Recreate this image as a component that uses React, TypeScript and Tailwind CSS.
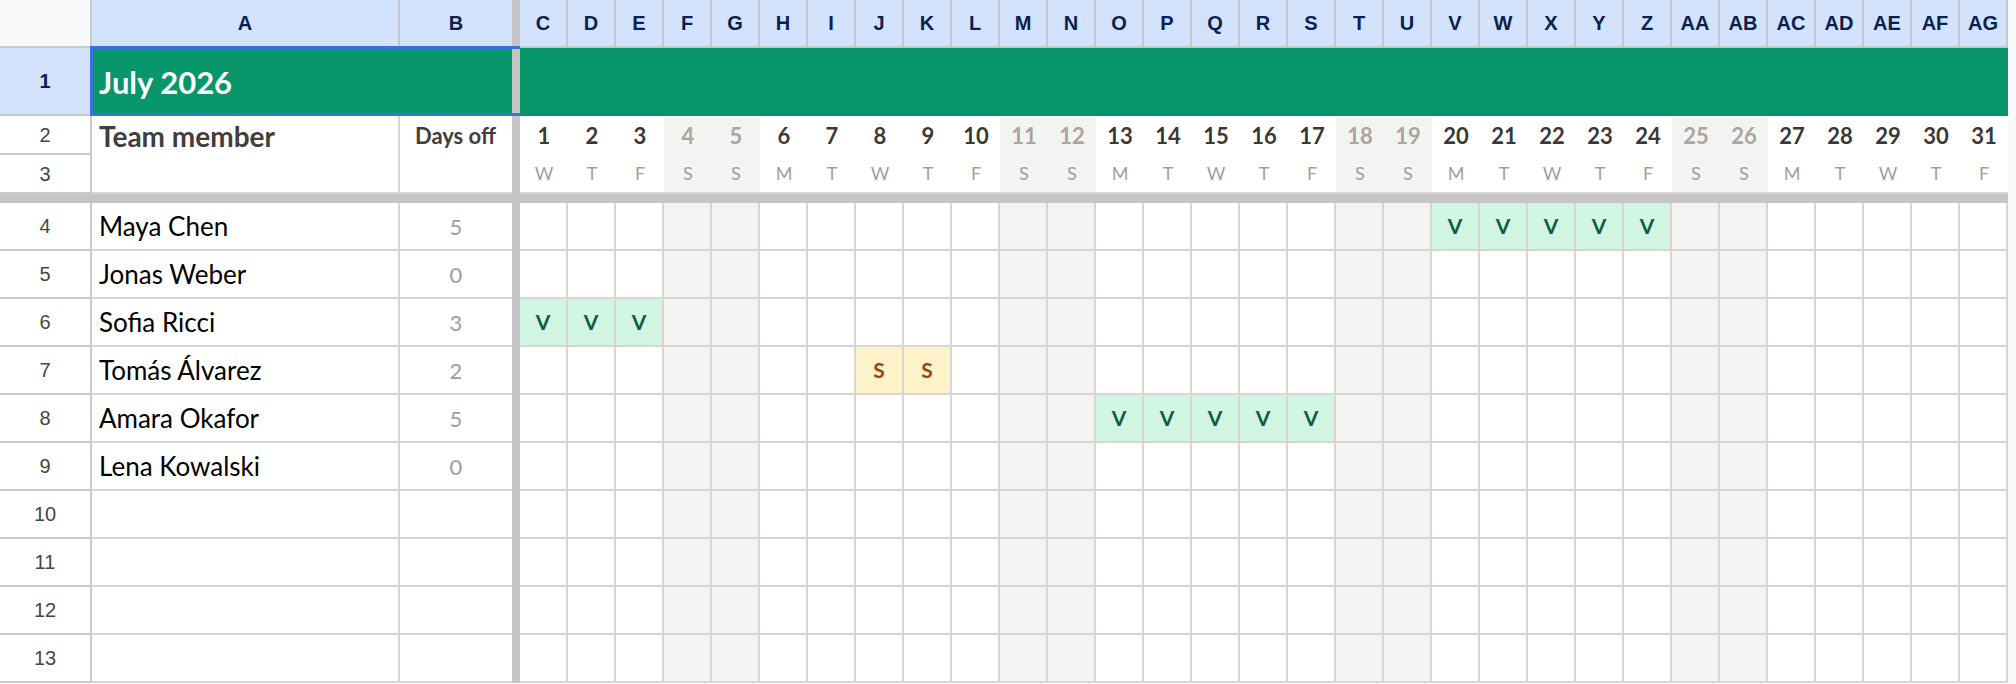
import React from "react";

type Mark = "V" | "S";

interface Member {
  name: string;
  off: number;
  marks: Record<number, Mark>;
}

const WEEKDAYS = ["W", "T", "F", "S", "S", "M", "T"];
const DAYS = Array.from({ length: 31 }, (_, i) => i + 1);

function colName(i: number): string {
  // i = 0 -> "C"
  const n = i + 2;
  if (n < 26) return String.fromCharCode(65 + n);
  return "A" + String.fromCharCode(65 + n - 26);
}

function range(from: number, to: number, m: Mark): Record<number, Mark> {
  const out: Record<number, Mark> = {};
  for (let d = from; d <= to; d++) out[d] = m;
  return out;
}

const MEMBERS: Member[] = [
  { name: "Maya Chen", off: 5, marks: range(20, 24, "V") },
  { name: "Jonas Weber", off: 0, marks: {} },
  { name: "Sofia Ricci", off: 3, marks: range(1, 3, "V") },
  { name: "Tomás Álvarez", off: 2, marks: range(8, 9, "S") },
  { name: "Amara Okafor", off: 5, marks: range(13, 17, "V") },
  { name: "Lena Kowalski", off: 0, marks: {} },
];

const isWeekend = (d: number) => WEEKDAYS[(d - 1) % 7] === "S";

const HEAD = { fontFamily: '"Liberation Sans", Arial, sans-serif' };
const BODY = { fontFamily: 'Lato, "Open Sans", sans-serif' };

function FrozenCol() {
  return <div className="w-[8px] shrink-0 self-stretch bg-[#c5c5c5]" />;
}

function RowHeader({ n }: { n: number }) {
  return (
    <div
      style={HEAD}
      className="w-[92px] shrink-0 h-full flex items-center justify-center border-r-2 border-b-2 border-[#c9c9c9] bg-white text-[20px] text-[#444746]"
    >
      {n}
    </div>
  );
}

function DayCell({ day, mark }: { day: number; mark?: Mark }) {
  let bg = "bg-white";
  if (mark === "V") bg = "bg-[#d1f6e3]";
  else if (mark === "S") bg = "bg-[#fdf2c9]";
  else if (isWeekend(day)) bg = "bg-[#f3f3f1]";
  return (
    <div
      className={`w-[48px] shrink-0 h-full flex items-center justify-center border-r-2 border-b-2 border-[#d9d5d2] ${bg}`}
    >
      {mark === "V" && <span className="font-bold text-[21px] text-[#0b5e45]">V</span>}
      {mark === "S" && <span className="font-bold text-[21px] text-[#9b4211]">S</span>}
    </div>
  );
}

function BodyRow({ n, member }: { n: number; member?: Member }) {
  return (
    <div className="flex h-[48px]" style={BODY}>
      <RowHeader n={n} />
      <div className="w-[308px] shrink-0 h-full flex items-center pl-[7px] border-r-2 border-b-2 border-[#d9d5d2] text-[26px] text-black">
        {member?.name}
      </div>
      <div className="w-[112px] shrink-0 h-full flex items-center justify-center border-b-2 border-[#d9d5d2] text-[22px] text-[#a29d99]">
        {member ? member.off : ""}
      </div>
      <FrozenCol />
      {DAYS.map((d) => (
        <DayCell key={d} day={d} mark={member?.marks[d]} />
      ))}
    </div>
  );
}

export default function App() {
  const rows = Array.from({ length: 10 }, (_, i) => i + 4);
  return (
    <div className="flex h-[684px] w-[2016px] bg-white overflow-hidden">
      <div className="relative w-[2008px] shrink-0 flex flex-col">
        {/* column letters */}
        <div className="flex h-[48px]" style={HEAD}>
          <div className="w-[92px] shrink-0 h-full bg-[#f8f9fa] border-r-2 border-b-2 border-[#c9c9c9]" />
          <div className="w-[308px] shrink-0 h-full bg-[#d3e3fd] border-r-2 border-b-2 border-[#c4c7cc] flex items-center justify-center font-bold text-[20px] text-[#0a2152]">
            A
          </div>
          <div className="w-[112px] shrink-0 h-full bg-[#d3e3fd] border-b-2 border-[#c4c7cc] flex items-center justify-center font-bold text-[20px] text-[#0a2152]">
            B
          </div>
          <FrozenCol />
          {DAYS.map((d, i) => (
            <div
              key={d}
              className="w-[48px] shrink-0 h-full bg-[#d3e3fd] border-r-2 border-b-2 border-[#c4c7cc] flex items-center justify-center font-bold text-[20px] text-[#0a2152]"
            >
              {colName(i)}
            </div>
          ))}
        </div>

        {/* row 1: month title */}
        <div className="flex h-[68px]">
          <div
            style={HEAD}
            className="w-[92px] shrink-0 h-full bg-[#d3e3fd] border-r-2 border-b-2 border-[#c9c9c9] flex items-center justify-center font-bold text-[20px] text-[#0a2152]"
          >
            1
          </div>
          <div
            style={BODY}
            className="w-[420px] shrink-0 h-full bg-[#06966a] flex items-center pl-[7px] font-bold text-[31px] text-white"
          >
            July 2026
          </div>
          <FrozenCol />
          <div className="flex-1 h-full bg-[#06966a]" />
        </div>

        {/* rows 2-3: day numbers and weekday letters */}
        <div className="flex h-[78px]" style={BODY}>
          <div className="w-[92px] shrink-0 h-full flex flex-col" style={HEAD}>
            <div className="h-[39px] flex items-center justify-center border-r-2 border-b-2 border-[#c9c9c9] text-[20px] text-[#444746]">
              2
            </div>
            <div className="h-[39px] flex items-center justify-center border-r-2 border-b-2 border-[#c9c9c9] text-[20px] text-[#444746]">
              3
            </div>
          </div>
          <div className="w-[308px] shrink-0 h-full border-r-2 border-b-2 border-[#d9d5d2] pl-[7px]">
            <div className="h-[39px] flex items-center font-bold text-[28px] text-[#423e3b]">Team member</div>
          </div>
          <div className="w-[112px] shrink-0 h-full border-b-2 border-[#d9d5d2] pr-[16px]">
            <div className="h-[38px] flex items-center justify-end font-bold text-[22px] text-[#423e3b]">Days off</div>
          </div>
          <FrozenCol />
          {DAYS.map((d) => {
            const we = isWeekend(d);
            return (
              <div
                key={d}
                className={`w-[48px] shrink-0 h-full flex flex-col border-b-2 border-[#d9d5d2] ${we ? "bg-[#f3f3f1]" : "bg-white"}`}
              >
                <div
                  className={`h-[39px] flex items-center justify-center font-bold text-[22px] ${we ? "text-[#aaa5a1]" : "text-[#3b3835]"}`}
                >
                  {d}
                </div>
                <div className="h-[37px] flex items-center justify-center text-[18px] text-[#a39e9a]">
                  {WEEKDAYS[(d - 1) % 7]}
                </div>
              </div>
            );
          })}
        </div>

        {/* frozen rows divider */}
        <div className="h-[9px] bg-[#c5c5c5]" />

        {rows.map((n) => (
          <BodyRow key={n} n={n} member={MEMBERS[n - 4]} />
        ))}

        {/* active selection on A1:B1 */}
        <div className="absolute left-[90px] top-[46px] w-[430px] h-[70px] border-t-[3px] border-b-[3px] border-l-[3px] border-[#3b70e6] pointer-events-none" />
      </div>
      <div className="flex-1 h-full bg-[#f8f9fa]" />
    </div>
  );
}
